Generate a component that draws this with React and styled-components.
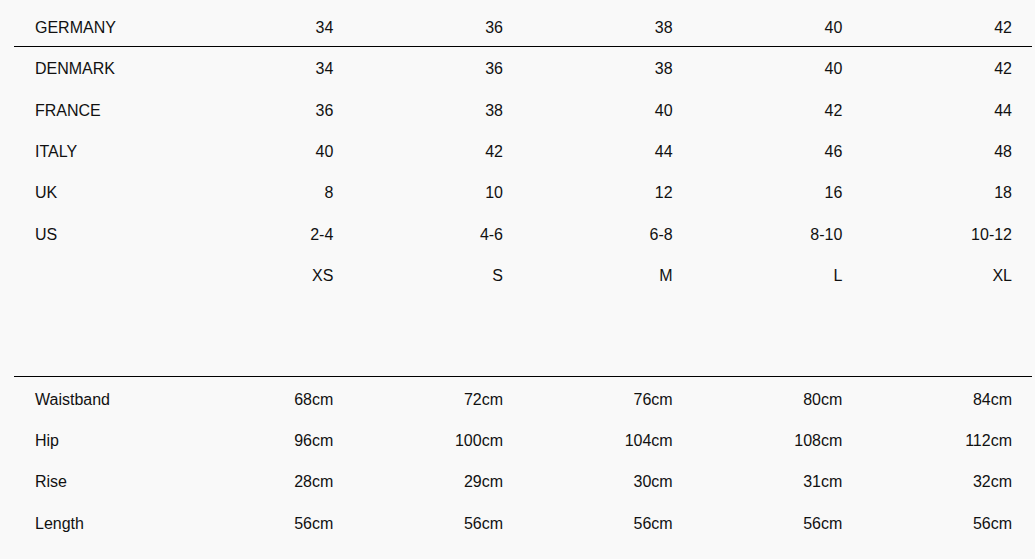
import React from 'react';
import styled, { createGlobalStyle } from 'styled-components';

const GlobalStyle = createGlobalStyle`
  body {
    margin: 0;
    background: #f9f9f9;
    font-family: "Liberation Sans", Arial, sans-serif;
    color: #111;
  }
`;

const Page = styled.div`
  padding: 5px 3px 0 14px;
  width: 1018px;
`;

const Table = styled.div`
  display: flex;
  flex-direction: column;
  margin-top: ${({ $gap }) => $gap || 0}px;
  border-top: ${({ $ruled }) => ($ruled ? '1px solid #000' : 'none')};
`;

const Row = styled.div`
  display: grid;
  grid-template-columns: repeat(6, 1fr);
  height: ${({ $head }) => ($head ? '41px' : '41.4px')};
  align-items: center;
  font-size: 16px;
  border-bottom: ${({ $head }) => ($head ? '1px solid #000' : 'none')};
`;

const Label = styled.div`
  padding: ${({ $head }) => ($head ? '5px' : '3px')} 0 0 21px;
`;

const Cell = styled.div`
  text-align: right;
  padding: ${({ $head }) => ($head ? '5px' : '3px')} 20px 0 0;
`;

const sizes = [
  ['GERMANY', '34', '36', '38', '40', '42'],
  ['DENMARK', '34', '36', '38', '40', '42'],
  ['FRANCE', '36', '38', '40', '42', '44'],
  ['ITALY', '40', '42', '44', '46', '48'],
  ['UK', '8', '10', '12', '16', '18'],
  ['US', '2-4', '4-6', '6-8', '8-10', '10-12'],
  ['', 'XS', 'S', 'M', 'L', 'XL'],
];

const measures = [
  ['Waistband', '68cm', '72cm', '76cm', '80cm', '84cm'],
  ['Hip', '96cm', '100cm', '104cm', '108cm', '112cm'],
  ['Rise', '28cm', '29cm', '30cm', '31cm', '32cm'],
  ['Length', '56cm', '56cm', '56cm', '56cm', '56cm'],
];

const SizeRow = ({ row, head }) => (
  <Row $head={head}>
    <Label $head={head}>{row[0]}</Label>
    {row.slice(1).map((v, i) => (
      <Cell key={i} $head={head}>{v}</Cell>
    ))}
  </Row>
);

export default function App() {
  return (
    <>
      <GlobalStyle />
      <Page>
        <Table>
          {sizes.map((r, i) => (
            <SizeRow key={i} row={r} head={i === 0} />
          ))}
        </Table>
        <Table $ruled $gap={81}>
          {measures.map((r, i) => (
            <SizeRow key={i} row={r} />
          ))}
        </Table>
      </Page>
    </>
  );
}
